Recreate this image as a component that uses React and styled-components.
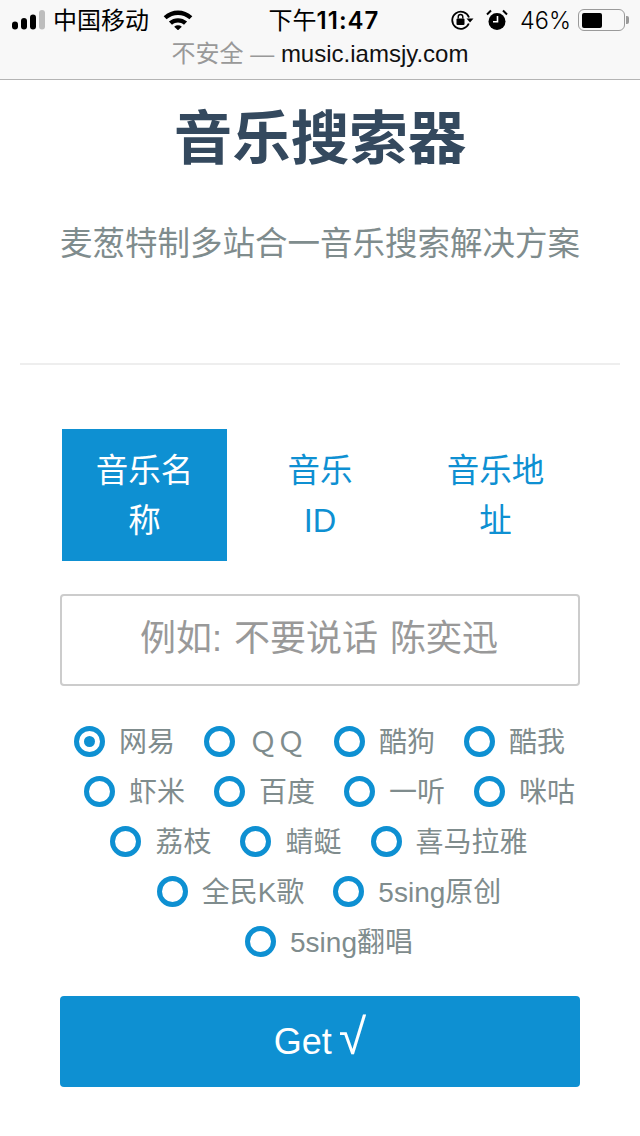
import React, { useState } from 'react'
import styled, { createGlobalStyle } from 'styled-components'

const SOURCE_ROWS = [
  { indent: -1, names: ['网易', 'ＱＱ', '酷狗', '酷我'] },
  { indent: 19, names: ['虾米', '百度', '一听', '咪咕'] },
  { indent: -2, names: ['荔枝', '蜻蜓', '喜马拉雅'] },
  { indent: 18, names: ['全民K歌', '5sing原创'] },
  { indent: 18, names: ['5sing翻唱'] },
]
const TABS = ['音乐名称', '音乐 ID', '音乐地址']

export default function App() {
  const [tab, setTab] = useState(0)
  const [source, setSource] = useState('网易')

  return (
    <>
      <GlobalStyle />
      <Chrome>
        <StatusBar>
          <StatusSide>
            <Signal viewBox="0 0 34 20">
              <rect x="0" y="11.500" width="6" height="8" rx="3" fill="#000" />
              <rect x="9" y="8" width="6" height="11.500" rx="3" fill="#000" />
              <rect x="18" y="4.500" width="6" height="15" rx="3" fill="#000" />
              <rect x="27" y="0" width="6" height="19.500" rx="3" fill="#bdbdbd" />
            </Signal>
            <Carrier>中国移动</Carrier>
            <Wifi viewBox="0 0 30 22">
              <path d="M0 7.500C8.500-.5 21.500-.5 30 7.500l-3 3.300C20 4.800 10 4.800 3 10.800z" fill="#000" />
              <path d="M5.500 13.200c5.500-4.700 13.500-4.700 19 0l-3.200 3.300c-3.700-3-8.900-3-12.600 0z" fill="#000" />
              <path d="M11 18.500c2.300-1.800 5.700-1.800 8 0l-4 3.800z" fill="#000" />
            </Wifi>
          </StatusSide>
          <Clock>
            下午<ClockDigits>11:47</ClockDigits>
          </Clock>
          <StatusRight>
            <RotationLock viewBox="0 0 24 20">
              <path d="M17.800 13.500A8.600 8.600 0 1 1 18 7.500" fill="none" stroke="#000" strokeWidth="1.800" />
              <path d="M15.500 8.500h7l-3.500 4z" fill="#000" />
              <rect x="5.500" y="8.500" width="8" height="6.500" rx="1" fill="#000" />
              <path d="M7.200 8.500V6.800a2.300 2.300 0 0 1 4.600 0v1.700" fill="none" stroke="#000" strokeWidth="1.400" />
            </RotationLock>
            <Alarm viewBox="0 0 22 22">
              <circle cx="11" cy="12.500" r="8.500" fill="#000" />
              <path d="M11.500 7v5.800H7" fill="none" stroke="#fff" strokeWidth="1.600" />
              <path d="M1 5.500 5 1.500M21 5.500 17 1.500" stroke="#000" strokeWidth="2" />
            </Alarm>
            <Percent>46%</Percent>
            <Battery>
              <BatteryLevel level={50} />
            </Battery>
            <BatteryTip />
          </StatusRight>
        </StatusBar>
        <Address>
          <Insecure>不安全 — </Insecure>music.iamsjy.com
        </Address>
      </Chrome>

      <Page>
        <Title>音乐搜索器</Title>
        <Subtitle>麦葱特制多站合一音乐搜索解决方案</Subtitle>
        <Rule />

        <Tabs>
          {TABS.map((name, i) => (
            <Tab key={name} active={tab === i} onClick={() => setTab(i)}>
              {name}
            </Tab>
          ))}
        </Tabs>

        <SearchInput placeholder="例如: 不要说话 陈奕迅" />

        <Sources>
          {SOURCE_ROWS.map((row) => (
            <SourceRow key={row.names[0]} indent={row.indent}>
              {row.names.map((name) => (
                <Source key={name} onClick={() => setSource(name)}>
                  <Radio checked={source === name} />
                  <SourceName>{name}</SourceName>
                </Source>
              ))}
            </SourceRow>
          ))}
        </Sources>

        <GetButton>
          Get <Tick>√</Tick>
        </GetButton>
      </Page>
    </>
  )
}

const GlobalStyle = createGlobalStyle`
  html, body {
    margin: 0;
    background: #fff;
  }
  body {
    font-family: "Liberation Sans", "Noto Sans CJK SC", sans-serif;
  }
  * {
    box-sizing: border-box;
  }
`

const Chrome = styled.header`
  height: 80px;
  background: #f8f8f8;
  border-bottom: 1px solid #b4b4b4;
  overflow: hidden;
`

const StatusBar = styled.div`
  display: grid;
  grid-template-columns: 1fr auto 1fr;
  align-items: center;
  height: 40px;
  padding: 0 11px 0 12px;
  color: #000;
  font-size: 24px;
`

const StatusSide = styled.div`
  display: flex;
  align-items: center;
`

const StatusRight = styled(StatusSide)`
  justify-content: flex-end;
`

const Signal = styled.svg`
  width: 34px;
  height: 20px;
`

const Carrier = styled.span`
  margin: 0 0 4px 7px;
`

const Wifi = styled.svg`
  width: 30px;
  height: 21px;
  margin: 0 0 2px 14px;
`

const Clock = styled.span`
  margin: 0 0 4px 7px;
`

const ClockDigits = styled.span`
  font-family: Inter, sans-serif;
  font-weight: 600;
  letter-spacing: 1px;
`

const RotationLock = styled.svg`
  width: 24px;
  height: 20px;
`

const Alarm = styled.svg`
  width: 22px;
  height: 22px;
  margin-left: 11px;
`

const Percent = styled.span`
  margin-left: 12px;
  font-family: Inter, sans-serif;
  font-size: 23.500px;
  font-weight: 300;
`

const Battery = styled.div`
  width: 47px;
  height: 22px;
  margin-left: 7px;
  padding: 2.500px;
  border: 1.500px solid #9a9a9a;
  border-radius: 6px;
`

const BatteryLevel = styled.div`
  width: ${(props) => props.level}%;
  height: 100%;
  background: #000;
  border-radius: 2px;
`

const BatteryTip = styled.div`
  width: 3px;
  height: 8px;
  margin-left: 1px;
  background: #9a9a9a;
  border-radius: 0 2px 2px 0;
`

const Address = styled.div`
  text-align: center;
  font-size: 24px;
  line-height: 28px;
  color: #111;
`

const Insecure = styled.span`
  color: #999;
`

const Page = styled.main`
  display: flex;
  flex-direction: column;
  padding: 0 20px;
`

const Title = styled.h1`
  margin: 24px 0 0;
  height: 70px;
  text-align: center;
  font-size: 58.500px;
  line-height: 70px;
  font-weight: 700;
  color: #34495e;
`

const Subtitle = styled.p`
  margin: 47px 0 0;
  text-align: center;
  font-size: 32.500px;
  line-height: 46px;
  color: #7f8c8d;
`

const Rule = styled.hr`
  width: 100%;
  margin: 96px 0 0;
  border: 0;
  border-top: 2px solid #eee;
`

const Tabs = styled.nav`
  display: grid;
  grid-template-columns: repeat(3, 165px);
  column-gap: 10.500px;
  margin: 64px 42px 0;
`

const Tab = styled.button`
  height: 132px;
  padding: 17px 33px 15px;
  border: 0;
  background: ${(props) => (props.active ? '#0e90d2' : 'transparent')};
  color: ${(props) => (props.active ? '#fff' : '#0e90d2')};
  font: inherit;
  font-size: 32.500px;
  line-height: 50px;
`

const SearchInput = styled.input`
  height: 92px;
  margin: 33px 40px 0;
  padding: 0 4px 2px 2px;
  border: 2px solid #ccc;
  border-radius: 4px;
  background: #fff;
  text-align: center;
  font: inherit;
  font-size: 36px;
  word-spacing: 2px;
  color: #333;

  &::placeholder {
    color: #999;
    opacity: 1;
  }
`

const Sources = styled.div`
  display: flex;
  flex-direction: column;
  margin: 30px 40px 0;
`

const SourceRow = styled.div`
  display: flex;
  justify-content: center;
  column-gap: 29px;
  margin-left: ${(props) => props.indent}px;
`

const Source = styled.label`
  display: flex;
  align-items: center;
  height: 50px;
`

const Radio = styled.span`
  position: relative;
  width: 31px;
  height: 31px;
  border: 5px solid #0e90d2;
  border-radius: 50%;

  &::after {
    content: '';
    display: ${(props) => (props.checked ? 'block' : 'none')};
    position: absolute;
    top: 5px;
    left: 5px;
    width: 11px;
    height: 11px;
    border-radius: 50%;
    background: #0e90d2;
  }
`

const SourceName = styled.span`
  margin: 0 0 2px 14px;
  font-size: 28px;
  color: #7f8c8d;
`

const GetButton = styled.button`
  height: 91px;
  margin: 30px 40px 0;
  padding-bottom: 9px;
  border: 0;
  border-radius: 4px;
  background: #0e90d2;
  color: #fff;
  font: inherit;
  font-size: 36px;
`

const Tick = styled.span`
  margin-left: -3px;
  font-size: 50px;
  line-height: 1;
`
